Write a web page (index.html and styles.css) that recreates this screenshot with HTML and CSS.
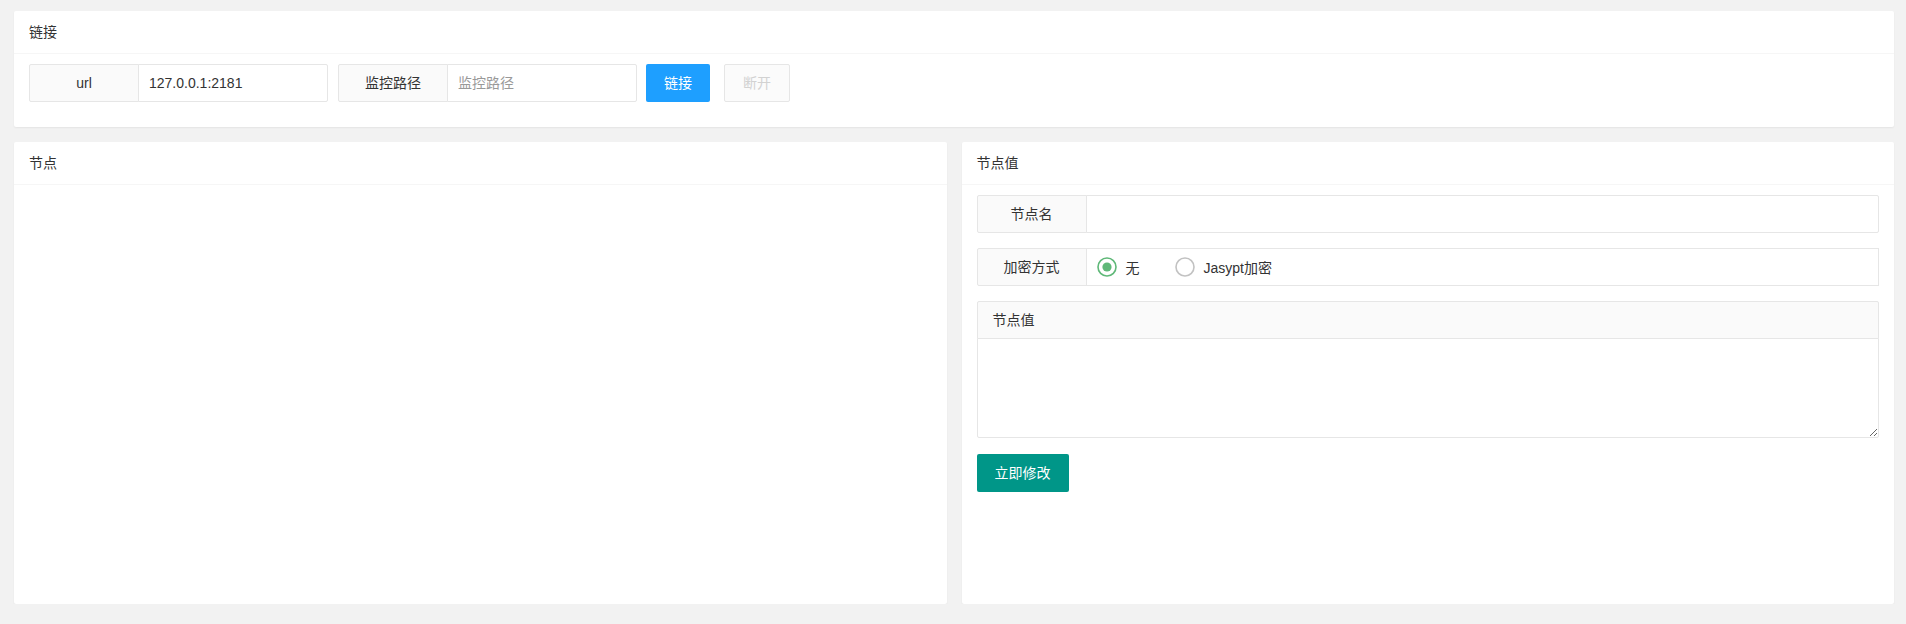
FILE: index.html
```html
<!DOCTYPE html>
<html lang="zh-CN">
<head>
<meta charset="utf-8">
<title>ZooKeeper</title>
<link rel="stylesheet" href="styles.css">
</head>
<body>
<div class="page">
  <div class="card">
    <div class="card-header">链接</div>
    <div class="card-body">
      <div class="form-row">
        <div class="group">
          <label class="form-label">url</label>
          <input class="form-input" type="text" value="127.0.0.1:2181">
        </div>
        <div class="group">
          <label class="form-label">监控路径</label>
          <input class="form-input" type="text" placeholder="监控路径">
        </div>
        <button class="btn btn-normal">链接</button>
        <button class="btn btn-disabled">断开</button>
      </div>
    </div>
  </div>
  <div class="columns">
    <div class="card col-card">
      <div class="card-header">节点</div>
      <div class="card-body"></div>
    </div>
    <div class="card col-card">
      <div class="card-header">节点值</div>
      <div class="card-body">
        <div class="item">
          <label class="form-label">节点名</label>
          <input class="form-input grow" type="text">
        </div>
        <div class="item">
          <label class="form-label">加密方式</label>
          <div class="radio-block">
            <span class="radio">
              <svg width="20" height="20" viewBox="0 0 20 20"><circle cx="10" cy="10" r="9" fill="none" stroke="#5FB878" stroke-width="1.6"/><circle cx="10" cy="10" r="4.6" fill="#5FB878"/></svg>
              <span class="radio-text">无</span>
            </span>
            <span class="radio">
              <svg width="20" height="20" viewBox="0 0 20 20"><circle cx="10" cy="10" r="9" fill="none" stroke="#c2c2c2" stroke-width="1.6"/></svg>
              <span class="radio-text">Jasypt加密</span>
            </span>
          </div>
        </div>
        <div class="item-text">
          <label class="text-label">节点值</label>
          <textarea class="textarea"></textarea>
        </div>
        <button class="btn btn-green">立即修改</button>
      </div>
    </div>
  </div>
</div>
</body>
</html>
```

FILE: styles.css
```css
* { box-sizing: border-box; }
html, body { margin: 0; padding: 0; }
body {
  background: #f2f2f2;
  font-family: "Liberation Sans", "Noto Sans CJK SC", Arial, sans-serif;
  font-size: 14px;
  color: #333;
}
.page {
  padding: 11px 12px 0 14px;
  display: flex;
  flex-direction: column;
  gap: 15px;
}
.card {
  background: #fff;
  border-radius: 2px;
  box-shadow: 0 1px 2px 0 rgba(0,0,0,.06);
}
.card-header {
  height: 43px;
  line-height: 42px;
  padding: 0 15px;
  border-bottom: 1px solid #f6f6f6;
  color: #333;
  font-size: 14px;
}
.card-body {
  padding: 10px 15px;
}
.form-row {
  display: flex;
  align-items: center;
  margin-bottom: 15px;
}
.group {
  display: flex;
  margin-right: 10px;
}
.group + .group { margin-right: 9px; }
.form-label {
  width: 110px;
  height: 38px;
  line-height: 20px;
  padding: 8px 15px;
  border: 1px solid #e6e6e6;
  border-radius: 2px 0 0 2px;
  background: #fafafa;
  text-align: center;
  color: #333;
  flex: none;
}
.form-input {
  width: 190px;
  height: 38px;
  margin-left: -1px;
  border: 1px solid #e6e6e6;
  border-radius: 0 2px 2px 0;
  padding: 0 10px;
  font-family: inherit;
  font-size: 14px;
  color: #333;
  background: #fff;
  outline: none;
}
.form-input::placeholder { color: #999; }
.form-input.grow { flex: 1; width: auto; }
.btn {
  height: 38px;
  line-height: 38px;
  padding: 0 18px;
  border: none;
  border-radius: 2px;
  font-family: inherit;
  font-size: 14px;
  color: #fff;
  white-space: nowrap;
}
.btn-normal { background: #1E9FFF; }
.btn-disabled {
  margin-left: 14px;
  border: 1px solid #e6e6e6;
  background: #fbfbfb;
  color: #d2d2d2;
  line-height: 36px;
}
.btn-green { background: #009688; }
.columns {
  display: flex;
  gap: 15px;
}
.col-card {
  flex: 1;
  height: 462px;
}
.item {
  display: flex;
  margin-bottom: 15px;
}
.radio-block {
  flex: 1;
  height: 38px;
  margin-left: -1px;
  border: 1px solid #e6e6e6;
  display: flex;
  align-items: center;
  padding-left: 10px;
  gap: 35px;
}
.radio {
  display: inline-flex;
  align-items: center;
  gap: 9px;
}
.radio svg { display: block; }
.radio-text { color: #333; }
.item-text {
  display: flex;
  flex-direction: column;
  margin-bottom: 16px;
}
.text-label {
  height: 38px;
  line-height: 36px;
  padding: 0 15px;
  border: 1px solid #e6e6e6;
  border-radius: 2px 2px 0 0;
  background: #fafafa;
  color: #333;
}
.textarea {
  display: block;
  width: 100%;
  height: 100px;
  margin-top: -1px;
  border: 1px solid #e6e6e6;
  border-radius: 0 0 2px 2px;
  padding: 6px 10px;
  font-family: inherit;
  font-size: 14px;
  outline: none;
  resize: vertical;
}
```
